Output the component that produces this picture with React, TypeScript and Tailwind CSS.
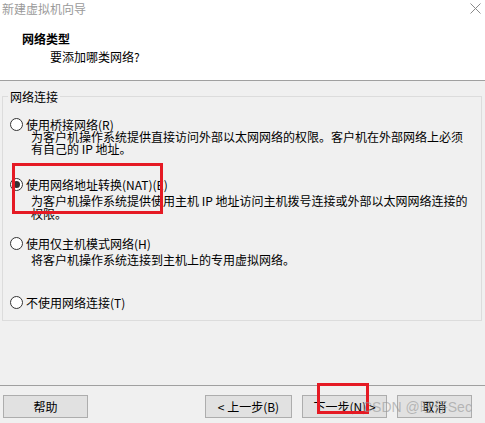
import React from "react";

const font = { fontFamily: '"Noto Sans CJK SC", "Microsoft YaHei", sans-serif' };

function Radio({ checked }: { checked?: boolean }) {
  return (
    <span className="flex h-[13px] w-[13px] shrink-0 items-center justify-center rounded-full border border-[#333333] bg-white">
      {checked && <span className="h-[7px] w-[7px] rounded-full bg-[#333333]" />}
    </span>
  );
}

function Btn({ label, w }: { label: string; w: string }) {
  return (
    <div
      className={`flex h-[23px] ${w} items-center justify-center border border-[#adadad] bg-[#e1e1e1] text-[12px] leading-[12px] text-black`}
    >
      {label}
    </div>
  );
}

export default function App() {
  return (
    <div className="relative flex h-[423px] w-[485px] flex-col overflow-hidden bg-[#f0f0f0] text-black" style={font}>
      {/* header */}
      <div className="flex h-[81px] shrink-0 flex-col border-b border-[#a0a0a0] bg-white">
        <div className="flex h-[18px] items-start justify-between pl-[2px] pr-[4px] pt-[2px]">
          <span className="text-[12px] leading-[13px] text-[#9a9a9a]">新建虚拟机向导</span>
          <svg width="11" height="11" viewBox="0 0 11 11" className="mt-[1px]">
            <path d="M0.5 0.5 L10.5 10.5 M10.5 0.5 L0.5 10.5" stroke="#8a8a8a" strokeWidth="1" fill="none" />
          </svg>
        </div>
        <div className="mt-[14px] pl-[22px] text-[12px] font-bold leading-[13px]">网络类型</div>
        <div className="mt-[5px] pl-[50px] text-[12px] leading-[13px]">要添加哪类网络?</div>
      </div>

      {/* body */}
      <div className="flex flex-1 flex-col px-[2px] pt-[15px]">
        <div className="flex h-[225px] w-[480px] flex-col border border-[#dcdcdc] text-[12px]">
          <span className="-mt-[7px] ml-[5px] h-[13px] self-start bg-[#f0f0f0] px-[2px] leading-[13px]">网络连接</span>

          <div className="mt-[15px] flex items-center gap-[3px] pl-[7px] leading-[12px]">
            <Radio />
            <span>使用桥接网络(R)</span>
          </div>
          <div className="pl-[28px] leading-[12px]">
            <div>为客户机操作系统提供直接访问外部以太网网络的权限。客户机在外部网络上必须</div>
            <div>有自己的 IP 地址。</div>
          </div>

          <div className="mt-[23px] flex items-center gap-[3px] pl-[7px] leading-[12px]">
            <Radio checked />
            <span>使用网络地址转换(NAT)(E)</span>
          </div>
          <div className="mt-[3px] pl-[28px] leading-[13px]">
            <div>为客户机操作系统提供使用主机 IP 地址访问主机拨号连接或外部以太网网络连接的</div>
            <div>权限。</div>
          </div>

          <div className="mt-[17px] flex items-center gap-[3px] pl-[7px] leading-[12px]">
            <Radio />
            <span>使用仅主机模式网络(H)</span>
          </div>
          <div className="mt-[4px] pl-[28px] leading-[12px]">
            <div>将客户机操作系统连接到主机上的专用虚拟网络。</div>
          </div>

          <div className="mt-[30px] flex items-center gap-[3px] pl-[7px] leading-[12px]">
            <Radio />
            <span>不使用网络连接(T)</span>
          </div>
        </div>
      </div>

      {/* footer */}
      <div className="flex h-[38px] shrink-0 items-start justify-between border-t border-[#a0a0a0] pl-[3px] pr-[13px] pt-[9px]">
        <Btn label="帮助" w="w-[85px]" />
        <div className="flex gap-[10px]">
          <Btn label="< 上一步(B)" w="w-[87px]" />
          <Btn label="下一步(N) >" w="w-[85px]" />
          <Btn label="取消" w="w-[75px]" />
        </div>
      </div>

      {/* annotations */}
      <div className="pointer-events-none absolute left-[12px] top-[163px] h-[51px] w-[151px] border-[3px] border-[#e51a24]" />
      <div className="pointer-events-none absolute left-[317px] top-[383px] h-[31px] w-[52px] border-[3px] border-[#e51a24]" />
      <div
        className="pointer-events-none absolute left-[362px] top-[398px] whitespace-nowrap text-[14px] leading-[18px] text-[rgba(150,150,150,0.6)]"
        style={{ fontFamily: '"Liberation Sans", "Noto Sans CJK SC", sans-serif' }}
      >
        CSDN @旺仔Sec
      </div>
    </div>
  );
}
